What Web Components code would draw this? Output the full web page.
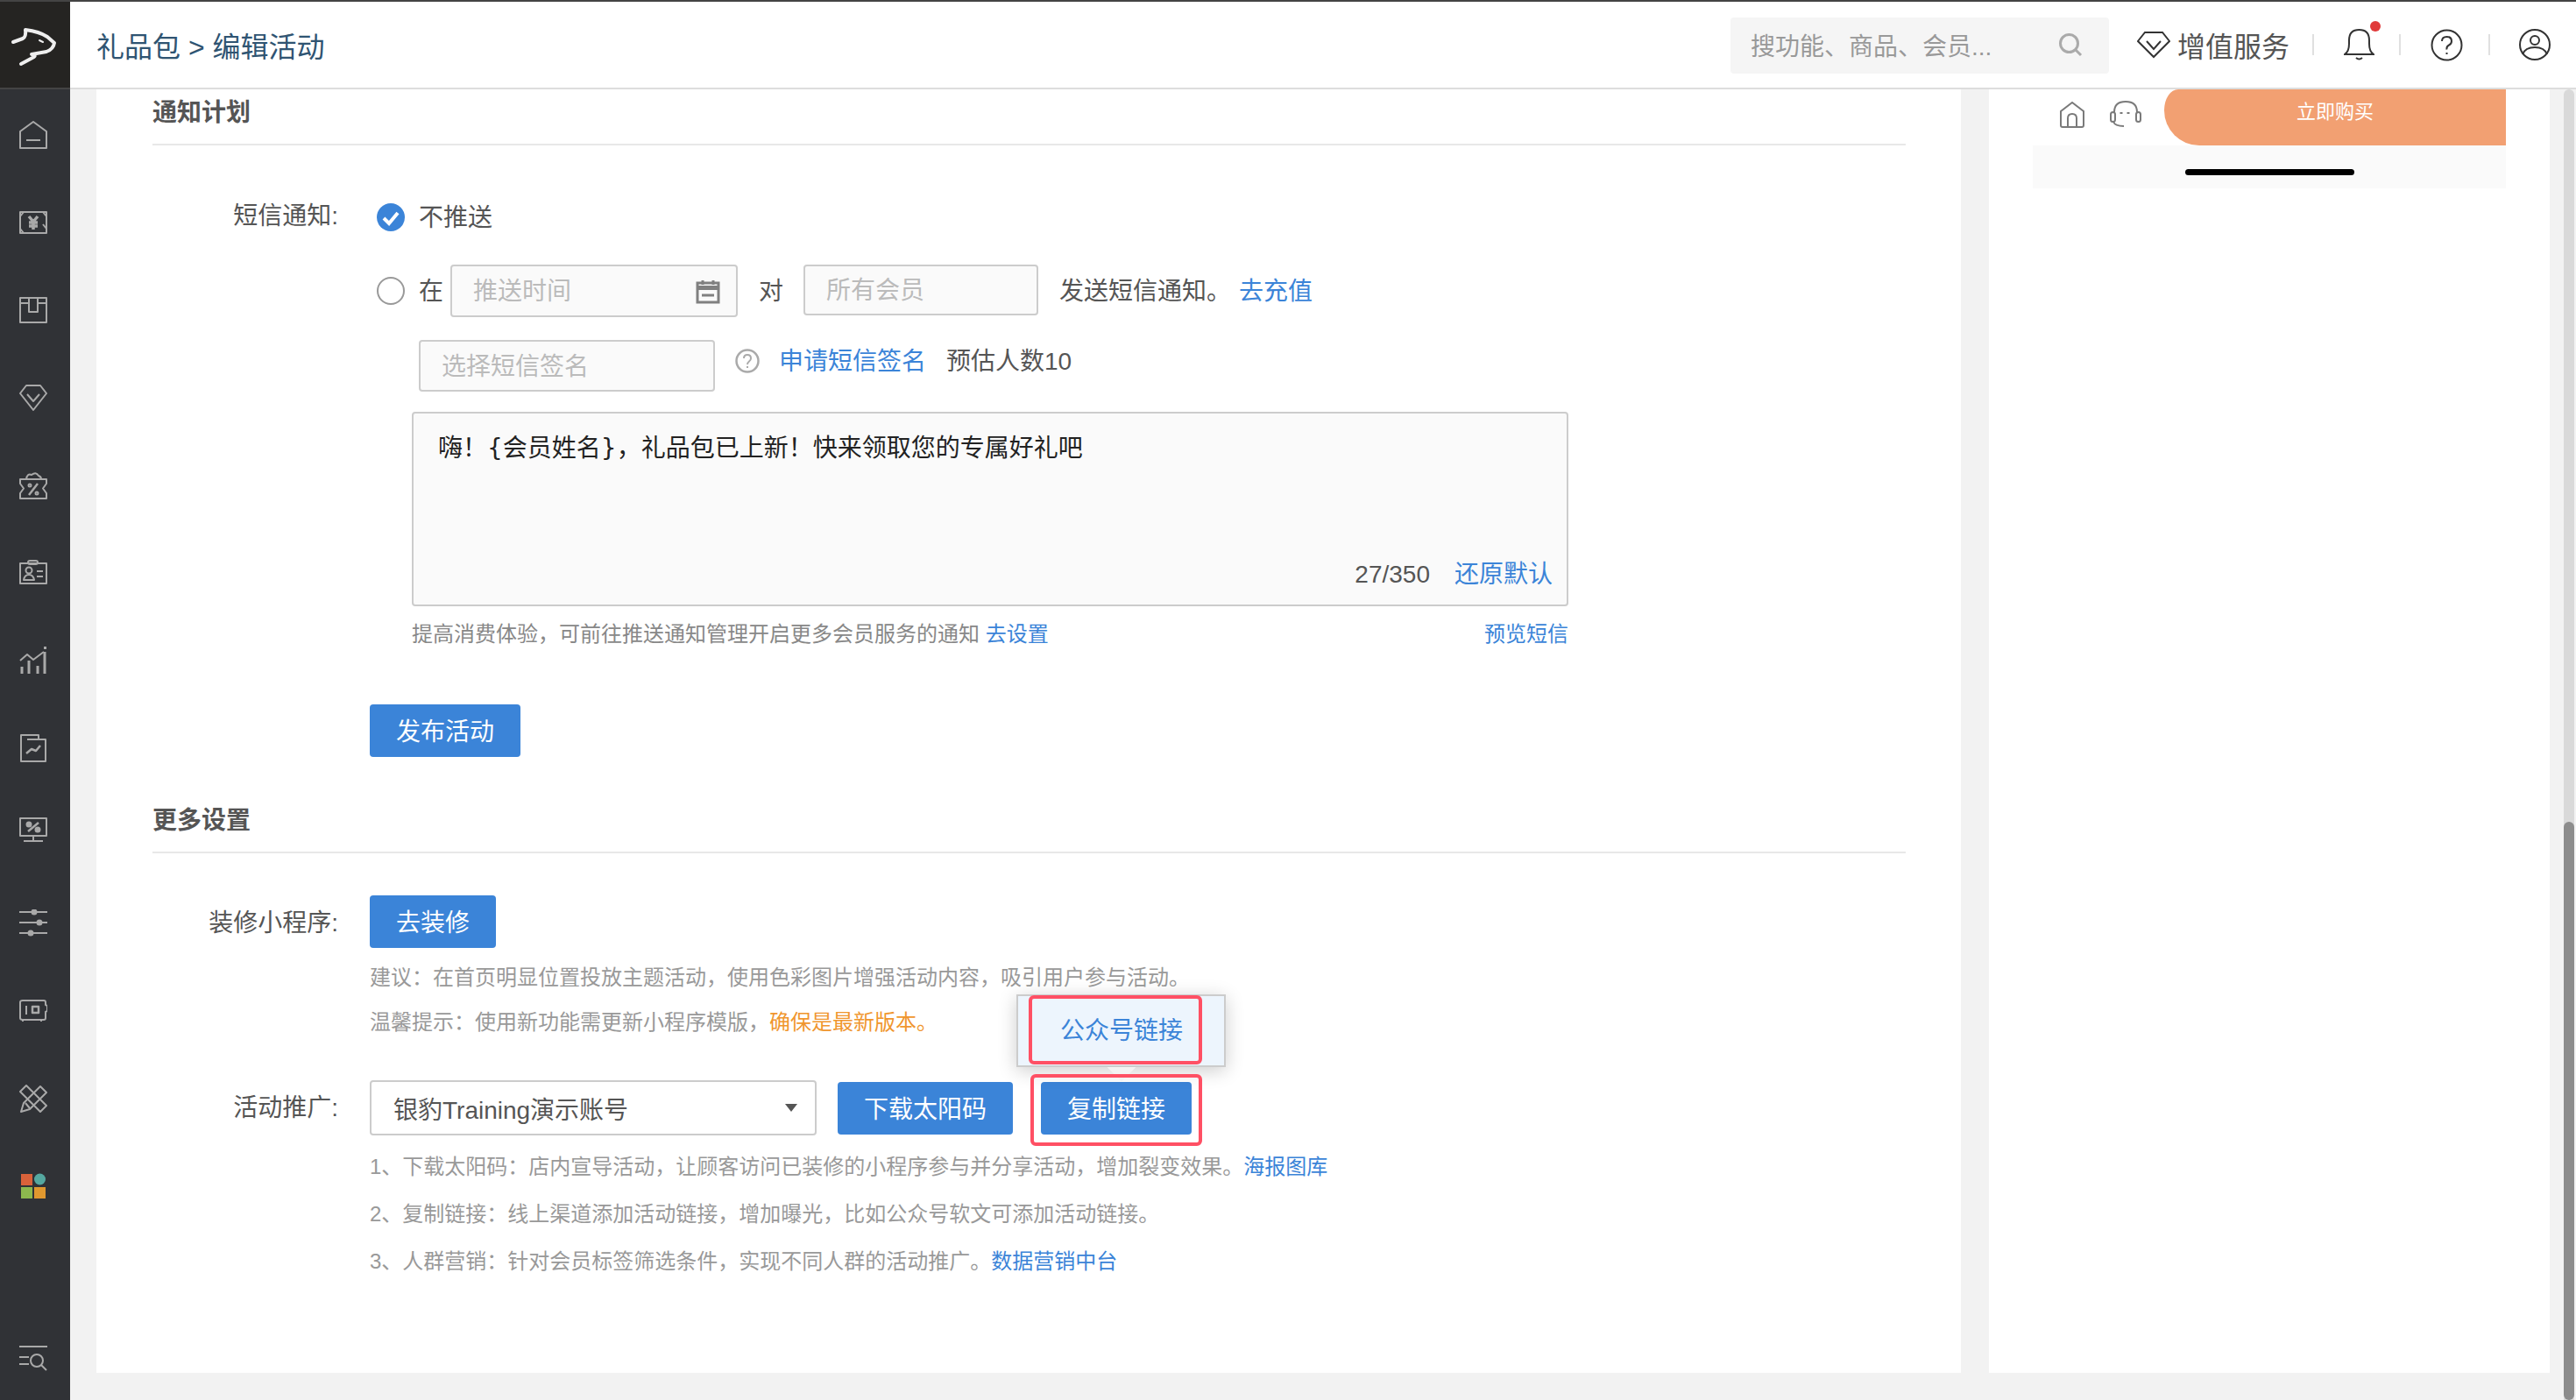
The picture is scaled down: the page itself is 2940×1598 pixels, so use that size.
<!DOCTYPE html>
<html lang="zh">
<head>
<meta charset="utf-8">
<title>编辑活动</title>
<style>
  html, body { margin: 0; padding: 0; }
  body {
    width: 2940px;
    height: 1598px;
    overflow: hidden;
    background: #f2f2f2;
    font-family: "Liberation Sans", "Noto Sans CJK SC", sans-serif;
    font-size: 28px;
    color: #555;
  }
</style>
</head>
<body>
<page-shell>
  <side-nav slot="nav"></side-nav>
  <top-bar slot="top"></top-bar>
  <div slot="main">
    <section-title>通知计划</section-title>
    <sms-plan></sms-plan>
    <section-title class="more">更多设置</section-title>
    <more-settings></more-settings>
  </div>
  <preview-panel slot="side"></preview-panel>
</page-shell>

<script>
const NAV_ICONS = [
  `<path d="M1 12 16 1l15 11v19H1z"/><path d="M8 22h16"/>`,
  `<path d="M1 4h30v24H1z"/><path d="M1 9l4-5M31 9l-4-5M1 23l4 5M31 23l-4-5"/><path stroke-width="3.500" d="M11 9l5 6 5-6M16 15v9M11 16h10M11 20h10"/>`,
  `<path d="M1 2h30v28H1z"/><path d="M1 8h10v10h10V8h10M11 2v6M21 2v6"/>`,
  `<path d="M8 2h16l7 9-15 19L1 11z"/><path d="M9 12l7 8 7-8"/>`,
  `<path d="M1 9h30v5l-4 5.500 4 5.500v6H1v-6l4-5.500L1 14z"/><path d="M8 9q1-7 6-5 5-4 8 1 3 1 3 4"/><path stroke-width="2.500" d="M11 27l10-13"/><circle cx="12" cy="16" r="1.500"/><circle cx="20" cy="25" r="1.500"/>`,
  `<path d="M1 5h30v23H1z"/><rect x="10" y="2" width="11" height="4" rx="2"/><circle cx="11" cy="13" r="3.500"/><path d="M5 24q1-6 6-6t6 6zM20 14h7M20 20h7"/>`,
  `<path d="M1 16l8-7 7 6 12-9"/><path stroke-width="3" d="M3 23v8M11 16v15M21 22v9M29 6v25"/><path stroke-width="3" d="M28 1.500h3"/>`,
  `<path d="M2 1h20v5h8v25H2z"/><path d="M9 6h13"/><path stroke-width="2.500" d="M8 22l6-5 5 2 5-6"/>`,
  `<path d="M1 1h30v20H1z"/><path d="M16 21v5M5 27h22"/><circle cx="11" cy="8" r="2.500" fill="#a9a9a9"/><circle cx="21" cy="14" r="2.500" fill="#a9a9a9"/><path stroke-width="2.500" d="M10 16 22 6"/>`,
  `<path d="M0 3h32M0 15h32M0 27h32"/><circle cx="17" cy="3" r="2.500" fill="#a9a9a9"/><circle cx="23" cy="15" r="2.500" fill="#a9a9a9"/><circle cx="13" cy="27" r="2.500" fill="#a9a9a9"/>`,
  `<path d="M4 4h24q2 0 2 2v3l2 1v6l-2 1v7q0 2-2 2H4q-3 0-3-2V6q0-2 3-2z"/><path d="M4 26v2M25 26v2M8 10v10"/><path stroke-width="2.500" d="M15 11h7v7h-7z"/>`,
  `<path d="M8 1 1 8l23 23 7-7z"/><path d="M2 31l3-10L24 2l7 7-19 19z"/><path d="M7 21l5 6"/>`,
  `<rect x="2" y="2" width="13" height="13" fill="#d9623a" stroke="none"/><circle cx="23.500" cy="8" r="6.500" fill="#55a8a0" stroke="none"/><rect x="2" y="17" width="13" height="13" fill="#8cb84e" stroke="none"/><rect x="17" y="17" width="13" height="13" fill="#e0982f" stroke="none"/>`
];

class PageShell extends HTMLElement {
  constructor() {
    super();
    this.attachShadow({ mode: "open" });
    this.shadowRoot.innerHTML = `
      <style>
        :host {
          display: grid;
          grid-template-columns: 80px 1fr;
          grid-template-rows: 100px 1496px;
          width: 2940px;
          height: 1598px;
          box-sizing: border-box;
          border-top: 2px solid #444;
          position: relative;
          overflow: hidden;
        }
        .nav { grid-row: 1 / 3; display: flex; }
        .nav ::slotted(*) { flex: 1; }
        .main {
          display: grid;
          grid-template-columns: 2128px 640px;
          gap: 32px;
          padding: 0 30px 31px;
          min-height: 0;
        }
        .sheet { background: #fff; padding: 0 63px 0 64px; min-height: 0; }
        .aside { background: #fff; min-height: 0; overflow: hidden; }
        .track {
          position: absolute;
          top: 100px;
          right: 2px;
          bottom: 0;
          width: 12px;
          background: #d9d9d9;
          border-radius: 6px 6px 0 0;
        }
        .thumb {
          position: absolute;
          top: 836px;
          bottom: 0;
          left: 0;
          right: 0;
          background: #8c8c8c;
          border-radius: 6px;
        }
      </style>
      <div class="nav"><slot name="nav"></slot></div>
      <slot name="top"></slot>
      <div class="main">
        <div class="sheet"><slot name="main"></slot></div>
        <div class="aside"><slot name="side"></slot></div>
      </div>
      <div class="track"><div class="thumb"></div></div>
    `;
  }
}

class SideNav extends HTMLElement {
  constructor() {
    super();
    this.attachShadow({ mode: "open" });
  }

  connectedCallback() {
    const items = NAV_ICONS.map((d, i) => `
      <div class="item"><svg ${i === 8 ? 'style="margin-top:-10px"' : ""} viewBox="0 0 32 32" width="32" height="32">${d}</svg></div>
    `).join("");
    this.shadowRoot.innerHTML = `
      <style>
        :host { display: flex; flex-direction: column; background: #303236; }
        .logo {
          height: 98px;
          background: #252422;
          border-bottom: 2px solid #444;
          flex: none;
        }
        .logo svg { display: block; }
        .list { padding-top: 2px; display: flex; flex-direction: column; }
        .item { height: 100px; padding-right: 4px; display: flex; align-items: center; justify-content: center; }
        .foot {
          margin-top: auto;
          height: 60px;
          padding: 0 4px 17px 0;
          display: flex;
          align-items: center;
          justify-content: center;
        }
        svg { fill: none; stroke: #a9a9a9; stroke-width: 2; stroke-linejoin: round; }
      </style>
      <div class="logo">
        <svg viewBox="0 0 80 98" width="80" height="98" style="stroke:#eee;stroke-width:4;stroke-linecap:round">
          <path d="M15 46l11-4q4-2 3-10 16 2 25 8l8 7q-1 7-9 10l-17 3q7 1 1 4l-13 7"/>
          <path d="M45 44l4 2" stroke-width="2"/>
        </svg>
      </div>
      <div class="list">${items}</div>
      <div class="foot">
        <svg viewBox="0 0 32 32" width="32" height="32">
          <path d="M0 2h32M0 14h11M0 22h11"/><circle cx="20" cy="18" r="7"/><path d="M25 23l6 6"/>
        </svg>
      </div>
    `;
  }
}

class TopBar extends HTMLElement {
  constructor() {
    super();
    this.attachShadow({ mode: "open" });
    this.shadowRoot.innerHTML = `
      <style>
        :host {
          display: flex;
          align-items: center;
          background: #fff;
          border-bottom: 2px solid #ddd;
          box-sizing: border-box;
          height: 100px;
          padding: 0 29px 0 30px;
        }
        .crumb { font-size: 32px; color: #2f5472; white-space: nowrap; }
        .search {
          margin-left: auto;
          width: 432px;
          height: 64px;
          box-sizing: border-box;
          background: #f5f5f5;
          border-radius: 4px;
          padding: 0 30px 2px 23px;
          display: flex;
          align-items: center;
          justify-content: space-between;
          color: #999;
          margin-top: 2px;
        }
        .vip { margin-left: 32px; display: flex; align-items: center; gap: 8px; font-size: 32px; color: #555; }
        .sep { width: 2px; height: 24px; background: #e0e0e0; }
        .bell { position: relative; display: flex; }
        .dot {
          position: absolute;
          top: -9px;
          right: -7px;
          width: 12px;
          height: 12px;
          border-radius: 50%;
          background: #e03a3a;
        }
        svg { display: block; fill: none; stroke: #333; stroke-width: 2; }
      </style>
      <div class="crumb">礼品包 &gt; 编辑活动</div>
      <div class="search">
        <span>搜功能、商品、会员...</span>
        <svg viewBox="0 0 28 28" width="28" height="28" style="stroke:#aaa;stroke-width:3">
          <circle cx="12.500" cy="12.500" r="10"/><path d="M20 20l6 6"/>
        </svg>
      </div>
      <div class="vip">
        <svg viewBox="0 0 38 32" width="38" height="32" stroke-width="2.500">
          <path d="M9 2h20l8 10-18 18L1 12z"/><path d="M11 12l8 9 8-9"/>
        </svg>
        <span>增值服务</span>
      </div>
      <div class="sep" style="margin-left:26px"></div>
      <div class="bell" style="margin-left:34px">
        <svg viewBox="0 0 35 36" width="35" height="36">
          <path d="M1 29q5-3 5-12V13Q6 1 17.500 1T29 13v4q0 9 5 12z"/><path d="M14 33q3.500 3 7 0"/>
        </svg>
        <span class="dot"></span>
      </div>
      <div class="sep" style="margin-left:28px"></div>
      <svg style="margin-left:34px" viewBox="0 0 37 37" width="37" height="37">
        <circle cx="18.500" cy="18.500" r="17"/>
        <path d="M13 14q0-5 5.500-5t5.500 5q0 3-3 4.500t-2.500 5"/><path d="M18.500 27v2"/>
      </svg>
      <div class="sep" style="margin-left:29px"></div>
      <svg style="margin-left:33px" viewBox="0 0 36 36" width="36" height="36">
        <circle cx="18" cy="18" r="17"/><circle cx="18" cy="13" r="5"/><path d="M4 29q3-8 14-8t14 8"/>
      </svg>
    `;
  }
}

class SectionTitle extends HTMLElement {
  constructor() {
    super();
    this.attachShadow({ mode: "open" });
    this.shadowRoot.innerHTML = `
      <style>
        :host {
          display: block;
          font-weight: bold;
          color: #555;
          line-height: 54px;
          padding-bottom: 8px;
          border-bottom: 2px solid #e8e8e8;
        }
        :host(.more) { margin-top: 46px; margin-bottom: 1px; }
      </style>
      <slot></slot>
    `;
  }
}

class FormRow extends HTMLElement {
  constructor() {
    super();
    this.attachShadow({ mode: "open" });
  }

  connectedCallback() {
    this.shadowRoot.innerHTML = `
      <style>
        :host {
          display: grid;
          grid-template-columns: 212px 1fr;
          column-gap: 36px;
        }
        .label {
          text-align: right;
          line-height: 60px;
          color: #555;
          white-space: nowrap;
          margin-top: var(--label-shift, 2px);
        }
      </style>
      <div class="label">${this.getAttribute("label")}</div>
      <div><slot></slot></div>
    `;
  }
}

class RadioDot extends HTMLElement {
  constructor() {
    super();
    this.attachShadow({ mode: "open" });
  }

  connectedCallback() {
    const on = this.hasAttribute("checked");
    this.shadowRoot.innerHTML = `
      <style>
        :host { display: block; width: 32px; height: 32px; flex: none; }
        svg { display: block; }
      </style>
      <svg viewBox="0 0 32 32" width="32" height="32">
        ${on
          ? `<circle cx="16" cy="16" r="16" fill="#3b84d8"/><path d="M8 17l6 6 10-12" fill="none" stroke="#fff" stroke-width="4"/>`
          : `<circle cx="16" cy="16" r="15" fill="#fff" stroke="#999" stroke-width="2"/>`}
      </svg>
    `;
  }
}

class TextBox extends HTMLElement {
  constructor() {
    super();
    this.attachShadow({ mode: "open" });
  }

  connectedCallback() {
    this.shadowRoot.innerHTML = `
      <style>
        :host {
          display: flex;
          align-items: center;
          justify-content: space-between;
          flex: none;
          box-sizing: border-box;
          border: 2px solid #ccc;
          border-radius: 4px;
          background: #fafafa;
          padding: 2px 18px 0 24px;
          color: #bbb;
          white-space: nowrap;
        }
      </style>
      <span>${this.getAttribute("placeholder")}</span>
      <slot></slot>
    `;
  }
}

class UiButton extends HTMLElement {
  constructor() {
    super();
    this.attachShadow({ mode: "open" });
    this.shadowRoot.innerHTML = `
      <style>
        :host {
          display: inline-flex;
          align-items: center;
          box-sizing: border-box;
          height: 60px;
          padding: 0 30px 2px;
          flex: none;
          background: #3b84d8;
          color: #fff;
          border-radius: 4px;
          white-space: nowrap;
        }
      </style>
      <slot></slot>
    `;
  }
}

class BlueLink extends HTMLElement {
  constructor() {
    super();
    this.attachShadow({ mode: "open" });
    this.shadowRoot.innerHTML = `<style>:host { color: #3b84d8; }</style><slot></slot>`;
  }
}

class SmsEditor extends HTMLElement {
  constructor() {
    super();
    this.attachShadow({ mode: "open" });
    this.shadowRoot.innerHTML = `
      <style>
        :host {
          display: flex;
          flex-direction: column;
          justify-content: space-between;
          box-sizing: border-box;
          height: 222px;
          border: 2px solid #ccc;
          border-radius: 4px;
          background: #fafafa;
          padding: 20px 16px 14px 28px;
          line-height: 40px;
        }
        .body { color: #222; }
        .foot { display: flex; justify-content: flex-end; gap: 28px; color: #555; }
      </style>
      <div class="body"><slot></slot></div>
      <div class="foot"><span>27/350</span><blue-link>还原默认</blue-link></div>
    `;
  }
}

class SmsPlan extends HTMLElement {
  constructor() {
    super();
    this.attachShadow({ mode: "open" });
    this.shadowRoot.innerHTML = `
      <style>
        :host { display: block; margin-top: 52px; }
        form-row { --label-shift: -1px; }
        .line { display: flex; align-items: flex-start; height: 60px; line-height: 62px; white-space: nowrap; }
        radio-dot { margin-top: 14px; }
        .first { padding-left: 8px; }
        .second { padding-left: 8px; margin-top: 24px; }
        .third { height: 59px; padding-left: 56px; margin-top: 26px; line-height: 50px; }
        sms-editor { margin: 23px 0 0 48px; width: 1320px; }
        .brace { font-family: "DejaVu Sans", sans-serif; }
        .hint {
          margin: 16px 0 0 48px;
          width: 1320px;
          display: flex;
          justify-content: space-between;
          font-size: 24px;
          line-height: 32px;
          color: #888;
        }
        ui-button { margin-top: 64px; }
        .help { display: block; margin: 10px 22px 0 23px; flex: none; }
      </style>
      <form-row label="短信通知:">
        <div class="line first">
          <radio-dot checked></radio-dot>
          <span style="margin-left:16px">不推送</span>
        </div>
        <div class="line second">
          <radio-dot></radio-dot>
          <span style="margin:0 8px 0 16px">在</span>
          <text-box placeholder="推送时间" style="width:328px;height:60px">
            <svg viewBox="0 0 28 28" width="28" height="28" style="display:block">
              <path d="M2 4h24v22H2z" fill="none" stroke="#808080" stroke-width="3"/>
              <path d="M2 9.500h24" fill="none" stroke="#808080" stroke-width="5"/>
              <path d="M8 1v5M20 1v5M7 18h14" fill="none" stroke="#808080" stroke-width="3"/>
            </svg>
          </text-box>
          <span style="margin:0 23px 0 24px">对</span>
          <text-box placeholder="所有会员" style="width:268px;height:58px"></text-box>
          <span style="margin-left:24px">发送短信通知。</span>
          <blue-link style="margin-left:9px">去充值</blue-link>
        </div>
        <div class="line third">
          <text-box placeholder="选择短信签名" style="width:338px;height:59px"></text-box>
          <svg class="help" viewBox="0 0 28 28" width="28" height="28">
            <circle cx="14" cy="14" r="12.500" fill="none" stroke="#aaa" stroke-width="2.500"/>
            <path d="M10 11q0-4 4-4t4 4q0 2-2 3.500T14 18M14 20v2" fill="none" stroke="#aaa" stroke-width="2"/>
          </svg>
          <blue-link>申请短信签名</blue-link>
          <span style="margin-left:23px">预估人数10</span>
        </div>
        <sms-editor>嗨！<span class="brace">{</span>会员姓名<span class="brace">}</span>，礼品包已上新！快来领取您的专属好礼吧</sms-editor>
        <div class="hint">
          <span>提高消费体验，可前往推送通知管理开启更多会员服务的通知 <blue-link>去设置</blue-link></span>
          <blue-link>预览短信</blue-link>
        </div>
        <ui-button>发布活动</ui-button>
      </form-row>
    `;
  }
}

class SelectBox extends HTMLElement {
  constructor() {
    super();
    this.attachShadow({ mode: "open" });
    this.shadowRoot.innerHTML = `
      <style>
        :host {
          display: flex;
          align-items: center;
          justify-content: space-between;
          box-sizing: border-box;
          width: 510px;
          height: 63px;
          flex: none;
          background: #fff;
          border: 2px solid #ccc;
          border-radius: 4px;
          padding: 0 20px 0 25px;
          color: #555;
          white-space: nowrap;
        }
        .caret {
          width: 0;
          height: 0;
          border: 7px solid transparent;
          border-top: 9px solid #555;
          border-bottom: 0;
        }
      </style>
      <span><slot></slot></span>
      <span class="caret"></span>
    `;
  }
}

class CopyLink extends HTMLElement {
  constructor() {
    super();
    this.attachShadow({ mode: "open" });
    this.shadowRoot.innerHTML = `
      <style>
        :host { display: block; position: relative; flex: none; height: 60px; }
        .mark {
          position: absolute;
          box-sizing: border-box;
          border: 4px solid #ff5064;
          border-radius: 6px;
        }
        .around { left: -12px; right: -12px; top: -9px; bottom: -13px; }
        .pop {
          position: absolute;
          left: -28px;
          top: -100px;
          width: 239px;
          height: 83px;
          box-sizing: border-box;
          background: #edf5fd;
          border: 2px solid #ccc;
          box-shadow: 0 4px 20px rgba(0, 0, 0, .2);
        }
        .pop-text {
          position: absolute;
          left: 48px;
          top: 0;
          line-height: 79px;
          color: #3b84d8;
          white-space: nowrap;
        }
        .inner { left: 12px; top: -1px; width: 198px; height: 79px; }
        .arrow {
          position: absolute;
          left: 75px;
          top: -17px;
          width: 34px;
          height: 17px;
          background: #f3f3f3;
          clip-path: polygon(0 0, 100% 0, 50% 100%);
        }
        ui-button { display: flex; }
      </style>
      <ui-button><slot></slot></ui-button>
      <div class="pop">
        <span class="pop-text">公众号链接</span>
        <div class="mark inner"></div>
      </div>
      <div class="arrow"></div>
      <div class="mark around"></div>
    `;
  }
}

class MoreSettings extends HTMLElement {
  constructor() {
    super();
    this.attachShadow({ mode: "open" });
    this.shadowRoot.innerHTML = `
      <style>
        :host { display: block; }
        .tip { font-size: 24px; line-height: 30px; color: #999; white-space: nowrap; }
        .warn { color: #f0962e; }
        .decorate { margin-top: 48px; }
        .promo { margin-top: 51px; }
        .actions { display: flex; align-items: center; height: 63px; }
      </style>
      <form-row label="装修小程序:" class="decorate">
        <ui-button>去装修</ui-button>
        <div class="tip" style="margin-top:19px">建议：在首页明显位置投放主题活动，使用色彩图片增强活动内容，吸引用户参与活动。</div>
        <div class="tip" style="margin-top:21px">温馨提示：使用新功能需更新小程序模版，<span class="warn">确保是最新版本。</span></div>
      </form-row>
      <form-row label="活动推广:" class="promo">
        <div class="actions">
          <select-box>银豹Training演示账号</select-box>
          <ui-button style="margin-left:24px">下载太阳码</ui-button>
          <copy-link style="margin-left:32px">复制链接</copy-link>
        </div>
        <div class="tip" style="margin-top:21px">1、下载太阳码：店内宣导活动，让顾客访问已装修的小程序参与并分享活动，增加裂变效果。<blue-link>海报图库</blue-link></div>
        <div class="tip" style="margin-top:24px">2、复制链接：线上渠道添加活动链接，增加曝光，比如公众号软文可添加活动链接。</div>
        <div class="tip" style="margin-top:24px">3、人群营销：针对会员标签筛选条件，实现不同人群的活动推广。<blue-link>数据营销中台</blue-link></div>
      </form-row>
    `;
  }
}

class PreviewPanel extends HTMLElement {
  constructor() {
    super();
    this.attachShadow({ mode: "open" });
    this.shadowRoot.innerHTML = `
      <style>
        :host { display: block; padding: 0 50px; }
        .bar { display: flex; align-items: center; height: 64px; padding-left: 31px; }
        svg { display: block; fill: none; stroke: #7a7a7a; stroke-width: 2; flex: none; margin-top: -6px; }
        .buy {
          margin-left: auto;
          width: 390px;
          height: 64px;
          background: #f2a072;
          border-radius: 16px 0 0 40px / 24px 0 0 40px;
          color: #fff;
          font-size: 22px;
          line-height: 52px;
          text-align: center;
        }
        .safe {
          height: 49px;
          background: #fafafa;
          display: flex;
          align-items: center;
          justify-content: center;
        }
        .pill { width: 193px; height: 7px; border-radius: 4px; background: #000; margin-top: 12px; }
      </style>
      <div class="bar">
        <svg viewBox="0 0 28 30" width="28" height="30">
          <path d="M1 11 14 1l13 10v16q0 2-2 2H3q-2 0-2-2z"/><path d="M9 29V19q0-5 5-5t5 5v10"/>
        </svg>
        <svg style="margin-left:29px;margin-top:-8px" viewBox="0 0 36 30" width="36" height="30">
          <path d="M5 13Q5 1 18 1t13 12"/><rect x="1" y="13" width="5" height="11" rx="2.500"/><rect x="30" y="13" width="5" height="11" rx="2.500"/>
          <path d="M4 24q2 5 12 5"/><path stroke-width="3" d="M13 13v2M21 13v2"/>
        </svg>
        <div class="buy">立即购买</div>
      </div>
      <div class="safe"><div class="pill"></div></div>
    `;
  }
}

customElements.define("page-shell", PageShell);
customElements.define("side-nav", SideNav);
customElements.define("top-bar", TopBar);
customElements.define("section-title", SectionTitle);
customElements.define("form-row", FormRow);
customElements.define("radio-dot", RadioDot);
customElements.define("text-box", TextBox);
customElements.define("ui-button", UiButton);
customElements.define("blue-link", BlueLink);
customElements.define("sms-editor", SmsEditor);
customElements.define("sms-plan", SmsPlan);
customElements.define("select-box", SelectBox);
customElements.define("copy-link", CopyLink);
customElements.define("more-settings", MoreSettings);
customElements.define("preview-panel", PreviewPanel);
</script>
</body>
</html>
